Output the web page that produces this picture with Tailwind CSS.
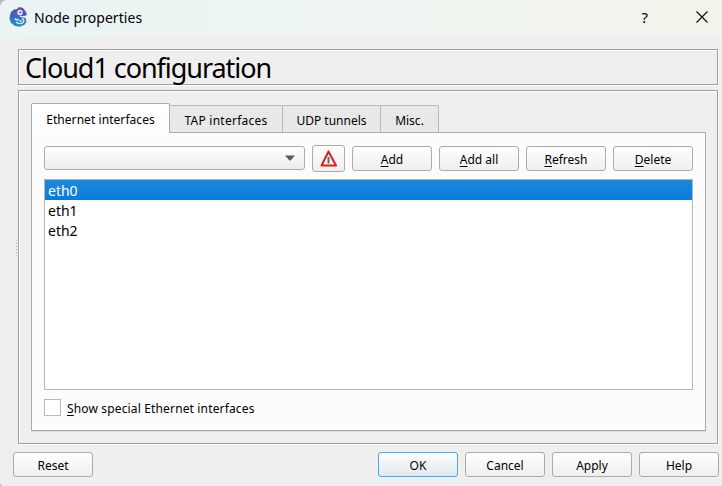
<!DOCTYPE html>
<html lang="en">
<head>
<meta charset="utf-8">
<title>Node properties</title>
<script src="https://cdn.jsdelivr.net/npm/@tailwindcss/browser@4"></script>
</head>
<body class="w-[722px] h-[486px] overflow-hidden bg-[#b9bcbe]">
<div class="relative w-[722px] h-[486px] flex flex-col rounded-tl-[8px] rounded-bl-[4px] overflow-hidden bg-[#efefef] text-black font-['Noto_Sans',sans-serif] text-[12px] leading-[16px]">
  <header class="h-[36px] shrink-0 flex items-center pl-[9px] pr-[14px] bg-linear-to-r from-[#eaf4f5] via-[#eef5f0] to-[#f2f3eb]">
    <svg class="w-[19px] h-[22px] shrink-0 -mt-[2px]" viewBox="0 0 19 22">
      <defs><linearGradient id="g" x1="0.6" y1="0" x2="0.4" y2="1"><stop offset="0" stop-color="#6a43b0"/><stop offset=".5" stop-color="#4268bd"/><stop offset="1" stop-color="#129fc5"/></linearGradient></defs>
      <path fill="url(#g)" d="M2 6 L5 3.500 L8 3 L10 1 L14 2 L17 6 L18 9 L14 10.500 L16.500 12 L17.500 15 L16 18.500 L11 20.800 L6 20 L2 17 L.5 13 L1 9 Z"/>
      <circle cx="11" cy="6.500" r="2.700" fill="#e6eaf8"/><circle cx="11.300" cy="6.500" r="1" fill="#514aa0"/>
      <path d="M19 10.300c-3 .8-5 .8-8-.1" fill="none" stroke="#e5f1f7" stroke-width="1.300"/>
      <path d="M6 12.500c1 1.500 2.500 1.500 4 .8M13 12.500c2 .5 2.500 2.500 1 4s-5 1.700-7-.5M10.500 15.500l2-1" fill="none" stroke="#d3edf5" stroke-width="1.400"/>
    </svg>
    <span class="ml-[6px] text-[14px] tracking-[0.05px]">Node properties</span>
    <span class="ml-auto mr-[2px] text-[15px] -mt-[3px]">?</span>
    <svg class="ml-[46px] -mt-[2px] w-[12px] h-[12px]" viewBox="0 0 12 12"><path d="M.5.5l11 11M11.500.5l-11 11" stroke="#111" stroke-width="1.200"/></svg>
  </header>
  <h1 class="mt-[13px] ml-[18px] w-[700px] h-[36px] shrink-0 border border-[#9f9f9f] shadow-[inset_1px_1px_#fff,1px_1px_#fff] pl-[6px] text-[27px] leading-[36px] tracking-[-1.05px] whitespace-nowrap">Cloud1 configuration</h1>
  <main class="mt-[5px] ml-[18px] w-[700px] h-[354px] shrink-0 border border-[#9f9f9f] shadow-[inset_1px_1px_#fff,1px_1px_#fff] pl-[12px] pt-[12px]">
    <nav class="relative z-10 h-[30px] flex items-end whitespace-nowrap">
      <div class="w-[139px] h-[30px] bg-linear-to-b from-white to-[#fcfcfc] border border-b-0 border-[#ababab] rounded-t-[2px] pt-[8px] text-center"><span class="tracking-[0.06px]">Ethernet interfaces</span></div>
      <div class="w-[113px] h-[28px] bg-[#e8e8e8] border border-l-0 border-[#b8b8b8] border-b-[#ababab] pt-[7px] text-center"><span class="tracking-[0.25px]">TAP interfaces</span></div>
      <div class="w-[98px] h-[28px] bg-[#e8e8e8] border border-l-0 border-[#b8b8b8] border-b-[#ababab] pt-[7px] text-center"><span>UDP tunnels</span></div>
      <div class="w-[58px] h-[28px] bg-[#e8e8e8] border border-l-0 border-[#b8b8b8] border-b-[#ababab] rounded-tr-[2px] pt-[7px] text-center"><span>Misc.</span></div>
    </nav>
    <section class="-mt-px w-[675px] h-[299px] border border-[#ababab] bg-[#fcfcfc] shadow-[0_1px_#dcdcdc] px-[12px] pt-[12px]">
      <div class="h-[27px] flex items-center whitespace-nowrap">
        <div class="w-[261px] h-[24px] -mt-px border border-[#ababab] rounded-[3px] bg-linear-to-b from-[#fefefe] to-[#ececec] flex items-center justify-end pr-[9px]"><svg class="w-[10px] h-[6px]" viewBox="0 0 10 6"><path d="M0 .5h10L5.500 5.500h-1z" fill="#595959"/></svg></div>
        <button class="ml-[7px] w-[33px] h-[27px] border border-[#ababab] rounded-[3px] bg-linear-to-b from-[#fefefe] to-[#efefef] flex items-center justify-center"><svg class="w-[18px] h-[17px] -mt-px" viewBox="0 0 18 17"><path d="M8.500 1.500L16 15.500H1.500Z" fill="#f3f3f3" stroke="#d81f22" stroke-width="2" stroke-linejoin="round"/><path d="M8.500 7v3.500M8.500 10.500v3" stroke="#666" stroke-width="2"/></svg></button>
        <button class="ml-[7px] w-[80px] h-[25px] border border-[#ababab] rounded-[3px] bg-linear-to-b from-[#fefefe] to-[#efefef] pt-[2px]"><span><u class="underline-offset-2">A</u>dd</span></button>
        <button class="ml-[7px] w-[80px] h-[25px] border border-[#ababab] rounded-[3px] bg-linear-to-b from-[#fefefe] to-[#efefef] pt-[2px]"><span><u class="underline-offset-2">A</u>dd all</span></button>
        <button class="ml-[7px] w-[80px] h-[25px] border border-[#ababab] rounded-[3px] bg-linear-to-b from-[#fefefe] to-[#efefef] pt-[2px]"><span><u class="underline-offset-2">R</u>efresh</span></button>
        <button class="ml-[7px] w-[80px] h-[25px] border border-[#ababab] rounded-[3px] bg-linear-to-b from-[#fefefe] to-[#efefef] pt-[2px]"><span><u class="underline-offset-2">D</u>elete</span></button>
      </div>
      <ul class="mt-[7px] w-[649px] h-[211px] border border-[#b5b5b5] bg-white text-[14px] leading-[22px]">
        <li class="h-[20px] pl-[3px] text-white bg-linear-to-b from-[#1b88de] to-[#087cdb]">eth0</li>
        <li class="h-[20px] pl-[3px]">eth1</li>
        <li class="h-[20px] pl-[3px]">eth2</li>
      </ul>
      <label class="mt-[9px] flex items-center h-[17px] whitespace-nowrap"><span class="w-[17px] h-[17px] border border-[#b9b9b9] bg-white"></span><span class="ml-[6px] mt-[2px] tracking-[0.15px]"><u class="underline-offset-2">S</u>how special Ethernet interfaces</span></label>
    </section>
  </main>
  <footer class="mt-[8px] ml-[13px] h-[25px] flex shrink-0">
    <button class="w-[80px] h-[25px] border border-[#ababab] rounded-[3px] bg-linear-to-b from-[#fefefe] to-[#efefef] pt-[2px]"><span>Reset</span></button>
    <button class="ml-[285px] w-[80px] h-[25px] border border-[#45abf5] rounded-[3px] bg-linear-to-b from-[#fdfeff] to-[#e2e9ef] pt-[2px]"><span>OK</span></button>
    <button class="ml-[7px] w-[80px] h-[25px] border border-[#ababab] rounded-[3px] bg-linear-to-b from-[#fefefe] to-[#efefef] pt-[2px]"><span>Cancel</span></button>
    <button class="ml-[7px] w-[80px] h-[25px] border border-[#ababab] rounded-[3px] bg-linear-to-b from-[#fefefe] to-[#efefef] pt-[2px]"><span>Apply</span></button>
    <button class="ml-[7px] w-[80px] h-[25px] border border-[#ababab] rounded-[3px] bg-linear-to-b from-[#fefefe] to-[#efefef] pt-[2px]"><span>Help</span></button>
  </footer>
  <div class="absolute left-[16px] top-[240px] h-[18px] w-px bg-[repeating-linear-gradient(to_bottom,#b5b5b5_0px,#b5b5b5_1px,transparent_1px,transparent_3px)]"></div>
</div>
</body>
</html>
